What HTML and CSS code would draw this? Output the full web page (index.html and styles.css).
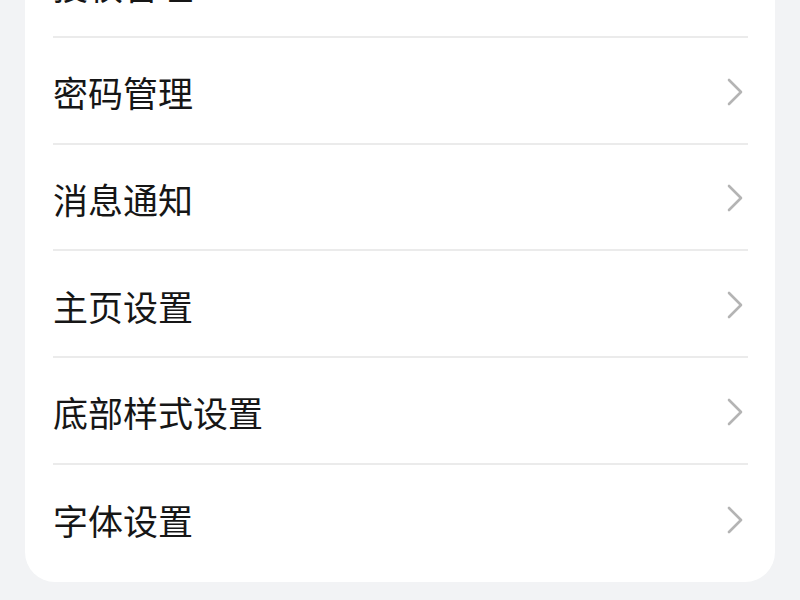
FILE: index.html
```html
<!DOCTYPE html>
<html lang="zh-CN">
<head>
    <meta charset="UTF-8">
    <meta name="viewport" content="width=device-width, initial-scale=1.0">
    <title>设置</title>
    <link rel="stylesheet" href="styles.css">
</head>
<body>
    <div class="page">
        <!-- 设置列表 -->
        <ul class="settings-card">
            <li class="settings-item">
                <span class="item-label">授权管理</span>
                <svg class="chevron" viewBox="0 0 16 28"><path d="M2 2 L14 14 L2 26"/></svg>
            </li>
            <li class="settings-item">
                <span class="item-label">密码管理</span>
                <svg class="chevron" viewBox="0 0 16 28"><path d="M2 2 L14 14 L2 26"/></svg>
            </li>
            <li class="settings-item">
                <span class="item-label">消息通知</span>
                <svg class="chevron" viewBox="0 0 16 28"><path d="M2 2 L14 14 L2 26"/></svg>
            </li>
            <li class="settings-item">
                <span class="item-label">主页设置</span>
                <svg class="chevron" viewBox="0 0 16 28"><path d="M2 2 L14 14 L2 26"/></svg>
            </li>
            <li class="settings-item">
                <span class="item-label">底部样式设置</span>
                <svg class="chevron" viewBox="0 0 16 28"><path d="M2 2 L14 14 L2 26"/></svg>
            </li>
            <li class="settings-item">
                <span class="item-label">字体设置</span>
                <svg class="chevron" viewBox="0 0 16 28"><path d="M2 2 L14 14 L2 26"/></svg>
            </li>
        </ul>
    </div>
</body>
</html>
```

FILE: styles.css
```css
/* 全局样式 */
* {
    margin: 0;
    padding: 0;
    box-sizing: border-box;
}

html, body {
    height: 100%;
    overflow: hidden;
}

body {
    background-color: #f2f3f5;
    color: #161616;
    font-family: "Noto Sans CJK SC", "Noto Sans", sans-serif;
}

.page {
    padding: 0 25px;
}

/* 设置卡片 */
.settings-card {
    list-style: none;
    background-color: #fff;
    border-radius: 30px;
    margin-top: -69px;
    padding: 0 27px 10px 28px;
}

.settings-item {
    display: flex;
    align-items: center;
    justify-content: space-between;
    height: 106.75px;
    padding-top: 3px;
    border-bottom: 2px solid #ebebeb;
}

.settings-item:last-child {
    border-bottom: none;
}

.item-label {
    font-size: 35px;
    line-height: 1;
}

.chevron {
    width: 16px;
    height: 28px;
    margin-right: 5px;
    fill: none;
    stroke: #b4b4b4;
    stroke-width: 2.6;
    stroke-linecap: round;
    stroke-linejoin: round;
}
```
